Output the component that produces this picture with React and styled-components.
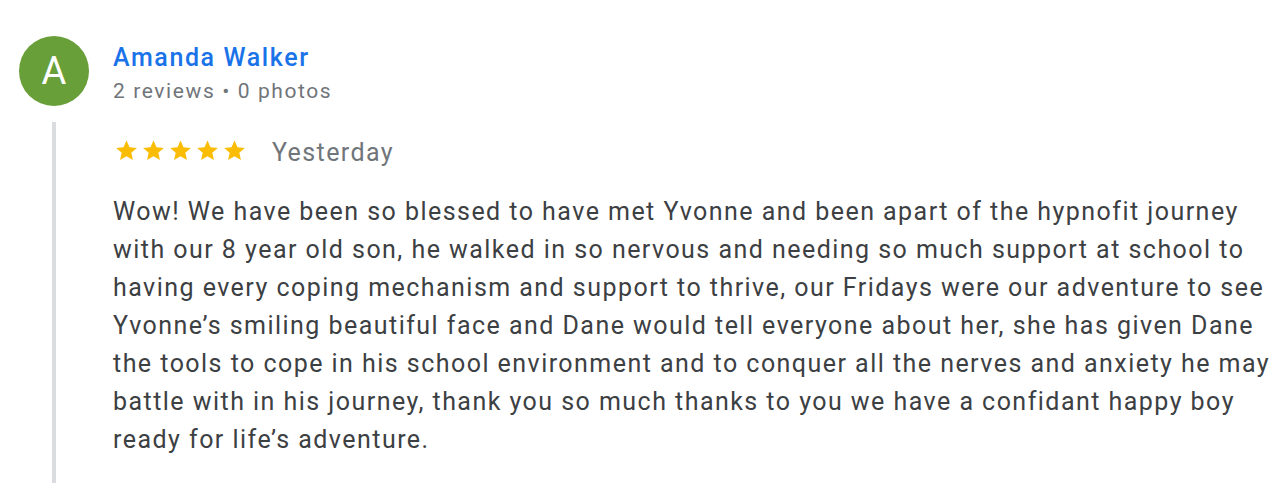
import React from 'react';
import styled, { createGlobalStyle } from 'styled-components';

const GlobalStyle = createGlobalStyle`
    html, body {
        margin: 0;
        padding: 0;
        background: #ffffff;
        font-family: Roboto, "Liberation Sans", Arial, sans-serif;
    }
`;

const Review = styled.div`
    width: 1280px;
    height: 490px;
    box-sizing: border-box;
    padding: 36px 0 0 19px;
    overflow: hidden;
`;

const Header = styled.div`
    display: flex;
    align-items: flex-start;
    gap: 24px;
`;

const Avatar = styled.div`
    width: 70px;
    height: 70px;
    border-radius: 50%;
    background: #689f38;
    color: #ffffff;
    display: flex;
    align-items: center;
    justify-content: center;
    font-size: 38px;
    font-weight: 400;
    flex-shrink: 0;
`;

const Who = styled.div`
    display: flex;
    flex-direction: column;
    padding-top: 5px;
`;

const Name = styled.div`
    color: #1a73e8;
    font-size: 25px;
    font-weight: 500;
    letter-spacing: 1.6px;
    line-height: 34px;
`;

const Meta = styled.div`
    color: #70757a;
    font-size: 21px;
    letter-spacing: 1.6px;
    line-height: 33px;
`;

const Body = styled.div`
    margin: 14px 0 0 33px;
    border-left: 4px solid #dadce0;
    padding: 12px 0 24px 57px;
`;

const RatingRow = styled.div`
    display: flex;
    align-items: center;
    gap: 26px;
    height: 32px;
`;

const Stars = styled.div`
    display: flex;
    gap: 4px;
    padding-left: 2px;
`;

const DateText = styled.span`
    color: #70757a;
    font-size: 25px;
    letter-spacing: 1.4px;
    padding-top: 4px;
`;

const Text = styled.p`
    margin: 27px 0 0;
    width: 1160px;
    color: #3c4043;
    font-size: 25px;
    letter-spacing: 1.46px;
    line-height: 38px;
`;

function Star() {
    return (
        <svg width="23" height="23" viewBox="0 0 24 24">
            <path fill="#fbbc04" d="M12 1.5l3.1 7.1 7.7.7-5.8 5.1 1.7 7.6L12 18l-6.7 4 1.7-7.6-5.8-5.1 7.7-.7z" />
        </svg>
    );
}

export default function App() {
    return (
        <Review>
            <GlobalStyle />
            <Header>
                <Avatar>A</Avatar>
                <Who>
                    <Name>Amanda Walker</Name>
                    <Meta>2 reviews • 0 photos</Meta>
                </Who>
            </Header>
            <Body>
                <RatingRow>
                    <Stars>
                        {[0, 1, 2, 3, 4].map(i => <Star key={i} />)}
                    </Stars>
                    <DateText>Yesterday</DateText>
                </RatingRow>
                <Text>
                    Wow! We have been so blessed to have met Yvonne and been apart of the hypnofit journey with our 8 year old son, he walked in so nervous and needing so much support at school to having every coping mechanism and support to thrive, our Fridays were our adventure to see Yvonne’s smiling beautiful face and Dane would tell everyone about her, she has given Dane the tools to cope in his school environment and to conquer all the nerves and anxiety he may battle with in his journey, thank you so much thanks to you we have a confidant happy boy ready for life’s adventure.
                </Text>
            </Body>
        </Review>
    );
}
